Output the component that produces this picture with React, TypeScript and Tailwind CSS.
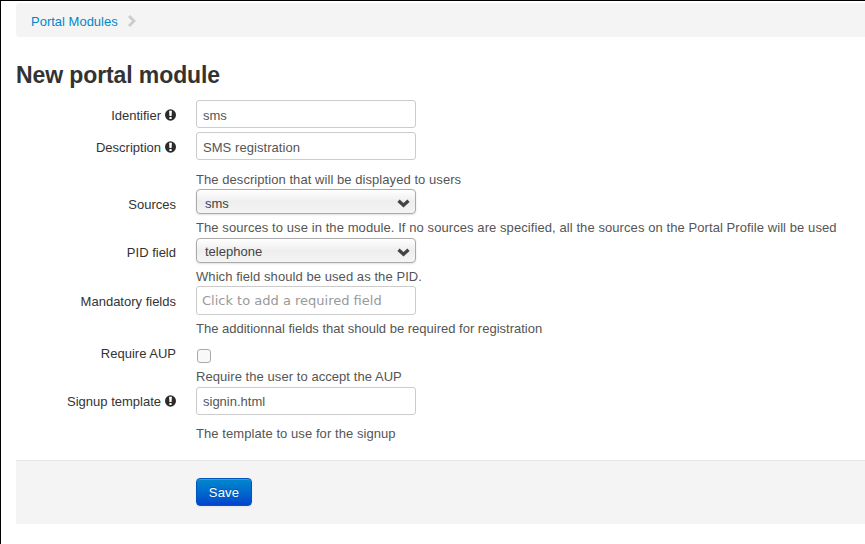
import React from "react";

const Info = () => (
  <svg className="ml-1 inline-block h-[12px] w-[11px] align-[-1px]" viewBox="0 0 11 12">
    <ellipse cx="5.5" cy="6" rx="5.5" ry="5.7" fill="#2b2b2b" />
    <path d="M4.1 1.8h2.8L6.6 7H4.4zM4.4 8h2.2v2.1H4.4z" fill="#fff" />
  </svg>
);

function Label({ children, top, info }: { children: string; top: string; info?: boolean }) {
  return (
    <div className={`w-40 shrink-0 text-right leading-5 text-[#333] ${top}`}>
      {children}
      {info && <Info />}
    </div>
  );
}

const inputClass =
  "block h-7 w-[220px] rounded-[3px] border border-[#ccc] bg-white px-1.5 text-[13px] leading-[18px] text-[#555] outline-none";

function Select({ value, pad }: { value: string; pad: string }) {
  return (
    <div className="flex h-[25px] w-[220px] items-center justify-between rounded-[4px] border border-[#aaa] bg-linear-to-b from-white via-[#eee] to-[#f4f4f4] pr-[5px] pl-2 text-[#444] shadow-[0_1px_2px_rgba(0,0,0,0.12)]">
      <span className={pad}>{value}</span>
      <svg className="mt-[3px]" width="13" height="9" viewBox="0 0 13 9" fill="none">
        <path d="M1.5 1.8l5 4.5 5-4.5" stroke="#444" strokeWidth="3.2" />
      </svg>
    </div>
  );
}

export default function App() {
  return (
    <div className="h-[544px] w-[865px] overflow-hidden border-t border-l border-black bg-white pt-[2px] pl-[15px] font-['Liberation_Sans',sans-serif] text-[13px] leading-5 text-[#333]">
      <nav className="flex h-[34px] items-center rounded-l-[4px] bg-[#f4f4f4] pt-[3px] pl-[15px]">
        <a className="text-[#0088cc]">Portal Modules</a>
        <svg className="mb-[2px] ml-[9px]" width="10" height="12" viewBox="0 0 10 12" fill="none">
          <path d="M2 1l5 5-5 5" stroke="#ccc" strokeWidth="2.8" />
        </svg>
      </nav>
      <h1 className="mt-[18px] h-[45px] text-[23px] leading-10 font-bold tracking-[-0.1px]">New portal module</h1>
      <form>
        <div className="flex h-8 gap-5">
          <Label top="pt-[6px]" info>Identifier</Label>
          <input className={`${inputClass} pt-[3px] pb-px`} defaultValue="sms" />
        </div>
        <div className="flex h-[57px] gap-5">
          <Label top="pt-[6px]" info>Description</Label>
          <div><input className={`${inputClass} pt-[3px] pb-px tracking-[0.06px]`} defaultValue="SMS registration" /><p className="mt-[10px] tracking-[0.06px] text-[#555]">The description that will be displayed to users</p></div>
        </div>
        <div className="flex h-[49px] gap-5">
          <Label top="pt-[6px]">Sources</Label>
          <div><Select value="sms" pad="pt-[5px]" /><p className="mt-[4px] tracking-[0.08px] whitespace-nowrap text-[#555]">The sources to use in the module. If no sources are specified, all the sources on the Portal Profile will be used</p></div>
        </div>
        <div className="flex h-[48px] gap-5">
          <Label top="pt-[5px]">PID field</Label>
          <div><Select value="telephone" pad="pt-[3px]" /><p className="mt-[4px] tracking-[0.07px] text-[#555]">Which field should be used as the PID.</p></div>
        </div>
        <div className="flex h-[58px] gap-5">
          <Label top="pt-[6px]">Mandatory fields</Label>
          <div><div className="h-[29px] w-[220px] rounded-[3px] border border-[#ccc] pl-[5px] font-['DejaVu_Sans',sans-serif] text-[13px] leading-[27px] text-[#999]">Click to add a required field</div><p className="mt-[4px] text-[#555]">The additionnal fields that should be required for registration</p></div>
        </div>
        <div className="flex h-[43px] gap-5">
          <Label top="">Require AUP</Label>
          <div><div className="mt-[5px] ml-px h-[14px] w-[14px] rounded-[3px] border border-[#aaa] bg-[#f8f8f8]" /><p className="mt-[4px] tracking-[0.06px] text-[#555]">Require the user to accept the AUP</p></div>
        </div>
        <div className="flex h-[73px] gap-5">
          <Label top="pt-[5px]" info>Signup template</Label>
          <div><input className={`${inputClass} pt-px pb-px`} defaultValue="signin.html" /><p className="mt-[9px] tracking-[0.07px] text-[#555]">The template to use for the signup</p></div>
        </div>
        <div className="h-16 border-t border-[#e5e5e5] bg-[#f4f4f4] pt-[17px] pl-[180px]">
          <button type="button" className="h-7 w-14 rounded-[4px] border border-[#0055bb] bg-linear-to-b from-[#0088cc] to-[#0044cc] pt-px tracking-[0.2px] text-white shadow-[inset_0_1px_0_rgba(255,255,255,0.2),0_1px_2px_rgba(0,0,0,0.05)] [text-shadow:0_-1px_0_rgba(0,0,0,0.25)]">Save</button>
        </div>
      </form>
    </div>
  );
}
